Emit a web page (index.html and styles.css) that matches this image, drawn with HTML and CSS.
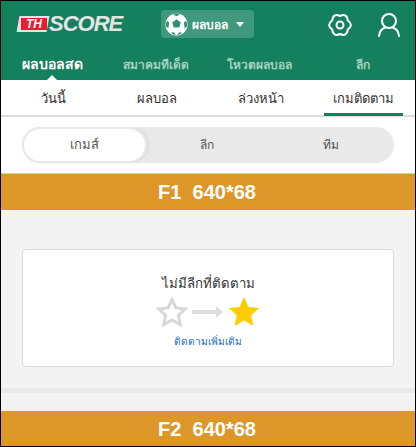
FILE: index.html
```html
<!DOCTYPE html>
<html lang="th">
<head>
    <meta charset="UTF-8">
    <meta name="viewport" content="width=device-width, initial-scale=1.0">
    <title>TH Score</title>
    <link rel="stylesheet" href="styles.css">
</head>
<body>
    <div class="page">
        <header class="topbar">
            <div class="logo">
                <span class="logo-badge"><span class="logo-th">TH</span></span>
                <span class="logo-score">SCORE</span>
            </div>
            <div class="sport-select">
                <svg class="ball" viewBox="0 0 24 24" width="23" height="23">
                    <circle cx="12" cy="12" r="11.500" fill="#fff"/>
                    <path d="M12 6.500l4.500 3.300-1.700 5.400H9.200L7.500 9.800z" fill="#2f8f70"/>
                    <path d="M8.500 1.500a11 11 0 0 1 7 0L12 3.500zM2 8a11 11 0 0 0-1 6l2.500 2 .8-6zM22 8a11 11 0 0 1 1 6l-2.500 2-.8-6zM6 20.500l3.500-.5 1.500 3a11 11 0 0 1-5-2.500zM18 20.500l-3.500-.5-1.500 3a11 11 0 0 0 5-2.500z" fill="#2f8f70"/>
                </svg>
                <span class="sport-name">ผลบอล</span>
                <span class="caret"></span>
            </div>
            <div class="top-icons">
                <svg viewBox="0 0 24 24" width="24" height="24" fill="none" stroke="#fff" stroke-width="2" stroke-linejoin="round">
                    <path d="M19.790 7.500Q26 12 19.790 16.500Q19 24.120 12 21Q5 24.120 4.210 16.500Q-2 12 4.210 7.500Q5 -.12 12 3Q19 -.12 19.790 7.500Z"/>
                    <circle cx="12" cy="12" r="3.500"/>
                </svg>
                <svg viewBox="0 0 22 24" width="22" height="24" fill="none" stroke="#fff" stroke-width="2" stroke-linecap="round">
                    <circle cx="11" cy="8" r="7"/>
                    <path d="M1 23c.5-4.500 3-7.500 6-8.300M21 23c-.5-4.500-3-7.500-6-8.300"/>
                </svg>
            </div>
        </header>
        <nav class="main-nav">
            <a class="main-link active">ผลบอลสด</a>
            <a class="main-link">สมาคมทีเด็ด</a>
            <a class="main-link">โหวตผลบอล</a>
            <a class="main-link">ลีก</a>
        </nav>
        <nav class="sub-nav">
            <a class="sub-link">วันนี้</a>
            <a class="sub-link">ผลบอล</a>
            <a class="sub-link">ล่วงหน้า</a>
            <a class="sub-link active">เกมติดตาม</a>
        </nav>
        <div class="segment-wrap">
            <div class="segment">
                <span class="segment-item active">เกมส์</span>
                <span class="segment-item">ลีก</span>
                <span class="segment-item">ทีม</span>
            </div>
        </div>
        <div class="ad first">F1&nbsp;&nbsp;640*68</div>
        <main class="content">
            <div class="card">
                <p class="card-title">ไม่มีลีกที่ติดตาม</p>
                <div class="stars">
                    <svg viewBox="0 0 32 30" width="32" height="30"><path d="M16 2.500L19.900 10.900 29.100 12 22.400 18.300 24.200 27.600 16 23 7.800 27.600 9.600 18.300 2.900 12 12.100 10.900Z" fill="none" stroke="#d8d8d8" stroke-width="3"/></svg>
                    <svg viewBox="0 0 32 12" width="32" height="12"><path d="M0 6h26" stroke="#dedede" stroke-width="4"/><path d="M24 0l7 6-7 6z" fill="#dedede"/></svg>
                    <svg viewBox="0 0 32 30" width="32" height="30"><path d="M16 0L20.410 9.930 31.200 11.060 23.130 18.320 25.400 28.940 16 23.500 6.600 28.940 8.870 18.320 .8 11.060 11.590 9.930Z" fill="#ffcc00"/></svg>
                </div>
                <a class="more-link">ติดตามเพิ่มเติม</a>
            </div>
        </main>
        <div class="strip"></div>
        <div class="strip-gap"></div>
        <div class="ad">F2&nbsp;&nbsp;640*68</div>
    </div>
</body>
</html>
```

FILE: styles.css
```css
* {
    margin: 0;
    padding: 0;
    box-sizing: border-box;
}

body {
    background: #000;
    font-family: "Liberation Sans", "Noto Sans", sans-serif;
}

.page {
    margin: 1px;
    height: 445px;
    width: 414px;
    background: #fff;
    overflow: hidden;
}

.topbar {
    height: 46px;
    background: #15805d;
    display: flex;
    align-items: center;
    padding-left: 17px;
}

.logo {
    width: 143px;
    display: flex;
    align-items: center;
    font-style: italic;
    font-weight: 700;
}

.logo-badge {
    width: 30px;
    height: 16px;
    background: #e4e4e4;
    transform: skewX(-10deg);
    padding: 2px 1px 2px 3px;
    display: flex;
}

.logo-th {
    flex: 1;
    background: #e3202f;
    color: #fff;
    font-size: 12px;
    line-height: 12px;
    text-align: center;
    transform: skewX(10deg);
}

.logo-score {
    color: #e4e4e4;
    font-size: 22px;
    line-height: 22px;
    letter-spacing: -1px;
    margin-left: 1px;
}

.sport-select {
    width: 93px;
    height: 28px;
    background: #41997d;
    border-radius: 4px;
    display: flex;
    align-items: center;
    padding-left: 4px;
    color: #fff;
    font-size: 12px;
    font-weight: 700;
}

.sport-name {
    margin-left: 4px;
}

.caret {
    margin-left: 8px;
    border-left: 4px solid transparent;
    border-right: 4px solid transparent;
    border-top: 5px solid #fff;
}

.top-icons {
    margin-left: auto;
    display: flex;
    align-items: center;
    gap: 26px;
    padding-right: 15px;
    padding-top: 1px;
}

.main-nav {
    height: 33px;
    background: #15805d;
    display: grid;
    grid-template-columns: 102px 105px 103px 104px;
}

.main-link {
    color: #a3d0c0;
    font-size: 12px;
    font-weight: 700;
    text-align: center;
    line-height: 36px;
    position: relative;
}

.main-link.active {
    color: #fff;
    font-size: 14px;
    line-height: 34px;
}

.main-link.active::after {
    content: '';
    position: absolute;
    left: 46px;
    top: 28px;
    border-left: 5px solid transparent;
    border-right: 5px solid transparent;
    border-bottom: 5px solid #fff;
}

.sub-nav {
    height: 37px;
    background: #fff;
    border-bottom: 2px solid #dcdcdc;
    display: grid;
    grid-template-columns: 104px 104px 103px 103px;
}

.sub-link {
    color: #333;
    font-size: 13px;
    text-align: center;
    line-height: 37px;
    height: 36px;
}

.sub-link.active {
    border-bottom: 3px solid #15805d;
    margin: 0 12px;
}

.segment-wrap {
    background: #fff;
    padding: 10px 21px;
    height: 56px;
}

.segment {
    height: 36px;
    background: #e9e9e9;
    border-radius: 18px;
    display: grid;
    grid-template-columns: 125px 120px 127px;
    font-size: 12px;
    color: #555;
}

.segment-item {
    text-align: center;
    line-height: 36px;
}

.segment-item.active {
    background: #fff;
    border: 2px solid #e9e9e9;
    border-radius: 18px;
    font-size: 13px;
    line-height: 32px;
    box-shadow: 2px 0 3px rgba(0, 0, 0, 0.05);
}

.ad {
    height: 36px;
    background: #dd9729;
    color: #fff;
    font-size: 20px;
    font-weight: 700;
    text-align: center;
    line-height: 36px;
    padding-right: 2px;
}

.ad.first {
    border-top: 1px solid #ccc;
    height: 37px;
}

.content {
    background: #f3f3f3;
    padding: 39px 21px 21px;
}

.card {
    height: 118px;
    background: #fff;
    border: 1px solid #d9d9d9;
    border-radius: 4px;
    display: flex;
    flex-direction: column;
    align-items: center;
    padding-top: 24px;
}

.card-title {
    color: #333;
    font-size: 13.2px;
    line-height: 20px;
}

.stars {
    display: flex;
    align-items: center;
    gap: 4px;
    height: 34px;
    margin-top: 1px;
}

.more-link {
    margin-top: 6px;
    color: #1a6fc4;
    font-size: 10.2px;
    line-height: 14px;
}

.strip {
    height: 5px;
    background: #e9e9e9;
}

.strip-gap {
    height: 18px;
    background: #f3f3f3;
}
```
